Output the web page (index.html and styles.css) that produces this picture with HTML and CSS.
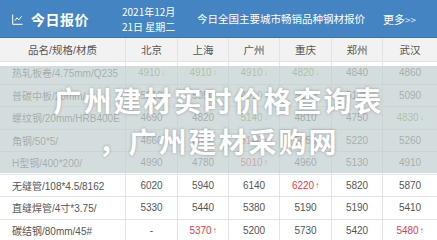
FILE: index.html
```html
<!DOCTYPE html>
<html lang="zh">
<head>
<meta charset="utf-8">
<link rel="stylesheet" href="styles.css">
</head>
<body>
<div class="page">
  <div class="topbar">
    <div class="brand">
      <svg class="icon" width="11" height="11" viewBox="0 0 11 11"><path d="M0.7 0.5V10.3H10.5" fill="none" stroke="#fff" stroke-width="1"/><path d="M3 6.5L5 3.8L6.8 5.8L9.8 2.2" fill="none" stroke="#fff" stroke-width="1"/></svg>
      <span class="brand-text">今日报价</span>
    </div>
    <div class="date"><span>2021年12月</span><span>21日 星期二</span></div>
    <div class="headline">今日全国主要城市畅销品种钢材报价</div>
    <div class="more">更多<span class="arr">&gt;&gt;</span></div>
  </div>
  <div class="table">
    <div class="th first-h">品名/规格/材质</div><div class="th">北京</div><div class="th">上海</div><div class="th">广州</div><div class="th">重庆</div><div class="th">郑州</div><div class="th">武汉</div>

    <div class="td name">热轧板卷/4.75mm/Q235</div><div class="td down">4910<span class="ar">↓</span></div><div class="td down">4910<span class="ar">↓</span></div><div class="td down">4910<span class="ar">↓</span></div><div class="td down">4820<span class="ar">↓</span></div><div class="td">4840</div><div class="td">4860</div>

    <div class="td name">普碳中板/20mm/</div><div class="td">5010</div><div class="td">5050</div><div class="td down">4910<span class="ar">↓</span></div><div class="td">5110</div><div class="td">5170</div><div class="td">5090</div>

    <div class="td name">螺纹钢/20mm/HRB400E</div><div class="td">4690</div><div class="td">4820</div><div class="td down">5140<span class="ar">↓</span></div><div class="td">4810</div><div class="td">4750</div><div class="td down">4830<span class="ar">↓</span></div>

    <div class="td name">角钢/50*5/</div><div class="td">4660</div><div class="td">5050</div><div class="td up">5140<span class="ar">↑</span></div><div class="td">5050</div><div class="td">5220</div><div class="td">5260</div>

    <div class="td name">H型钢/400*200/</div><div class="td">4990</div><div class="td">4780</div><div class="td up">5010<span class="ar">↑</span></div><div class="td">4960</div><div class="td">5130</div><div class="td">4910</div>

    <div class="td name">无缝管/108*4.5/8162</div><div class="td">6020</div><div class="td">5940</div><div class="td">6140</div><div class="td up">6220<span class="ar">↑</span></div><div class="td">5820</div><div class="td">5870</div>

    <div class="td name">直缝焊管/4寸*3.75/</div><div class="td">5330</div><div class="td">5440</div><div class="td">5380</div><div class="td">5190</div><div class="td">5190</div><div class="td">5410</div>

    <div class="td name">碳结钢/80mm/45#</div><div class="td">-</div><div class="td up">5370<span class="ar">↑</span></div><div class="td">5200</div><div class="td">5730</div><div class="td">5420</div><div class="td up">5480<span class="ar">↑</span></div>
  </div>
  <div class="fog"></div>
  <h1 class="title">广州建材实时价格查询表<br>，广州建材采购网</h1>
</div>
</body>
</html>
```

FILE: styles.css
```css
html, body {
  margin: 0;
  padding: 0;
  background: #fff;
}
.page {
  position: relative;
  width: 437px;
  height: 240px;
  overflow: hidden;
  font-family: "Liberation Sans", "Noto Sans CJK SC", sans-serif;
  color: #555;
}
.topbar {
  height: 37px;
  background: #4584c2;
  border-bottom: 1px solid #3a74ad;
  display: flex;
  align-items: center;
  color: #fff;
  font-family: "Noto Sans CJK SC", sans-serif;
}
.brand {
  display: flex;
  align-items: center;
  padding-left: 12px;
  width: 110px;
}
.icon {
  margin-right: 8px;
  margin-top: 1px;
}
.brand-text {
  font-size: 14px;
  font-weight: 700;
  letter-spacing: 0.5px;
}
.date {
  display: flex;
  flex-direction: column;
  font-size: 10px;
  line-height: 15px;
  width: 75px;
}
.headline {
  font-size: 10.5px;
  width: 186px;
  white-space: nowrap;
}
.more {
  font-size: 11px;
}
.more .arr {
  font-size: 10px;
  color: #dfe9f5;
}
.table {
  display: grid;
  grid-template-columns: 126px 52px 51px 51px 52px 51px 54px;
  grid-template-rows: 24px repeat(8, 22.5px);
}
.th, .td {
  display: flex;
  align-items: center;
  justify-content: center;
  font-size: 10px;
  border-right: 1px solid #e3e3e3;
  border-bottom: 1px solid #e3e3e3;
  box-sizing: border-box;
  white-space: nowrap;
}
.th {
  background: #f2f2f2;
  color: #555;
  font-size: 10.5px;
}
.th:nth-child(7n), .td:nth-child(7n) {
  border-right: none;
}
.td.name {
  justify-content: flex-start;
  padding-left: 12px;
}
.td.down {
  color: #6f9f3c;
}
.td.up {
  color: #e2404c;
}
.ar {
  font-size: 8px;
  margin-left: 1px;
}
.fog {
  position: absolute;
  left: 0;
  top: 66px;
  width: 437px;
  height: 107px;
  background: rgba(196, 208, 208, 0.72);
}
.title {
  position: absolute;
  left: 0;
  top: 80px;
  width: 437px;
  margin: 0;
  text-align: center;
  font-family: "Noto Sans CJK SC", sans-serif;
  font-size: 28px;
  line-height: 41px;
  font-weight: 700;
  letter-spacing: 2px;
  color: #fff;
  text-shadow: 0 0 3px rgba(60, 70, 70, 0.45);
}
```
